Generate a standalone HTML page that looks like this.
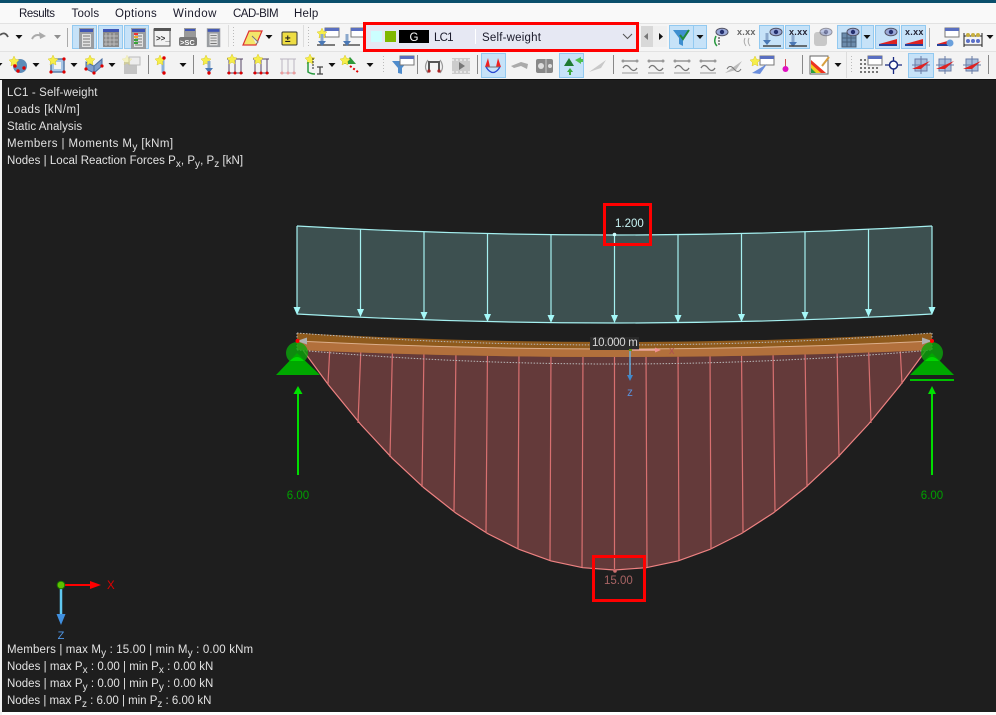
<!DOCTYPE html>
<html><head><meta charset="utf-8"><style>
html,body{margin:0;padding:0;background:#fff;width:996px;height:715px;overflow:hidden}
svg{display:block}
text{font-family:"Liberation Sans",sans-serif}
.m{font-size:11.5px;fill:#1a1a2a;letter-spacing:.2px}
.o{font-size:11.5px;fill:#e2e2e2;letter-spacing:.2px}
.s{font-size:10px}
.h{fill:#c6e2f8;stroke:#92c9f0}
.ic{font-size:9px;font-weight:bold;fill:#666;letter-spacing:.3px}
.ib{font-size:9px;font-weight:bold;fill:#223;letter-spacing:.3px}
</style></head><body>
<svg width="996" height="715" viewBox="0 0 996 715" xmlns="http://www.w3.org/2000/svg">
<defs>
<path id="d" d="M-3.5 0h7l-3.5 4z" fill="#111"/>
<g id="win"><rect x="0" y="0" width="15" height="21" fill="#9a9da1"/><rect x="1" y="1" width="13" height="3" fill="#3f55b5"/><rect x="3" y="6" width="9" height="13" fill="#e2e2e2"/><path d="M4 8h7M4 11h7M4 14h7M4 17h7" stroke="#777"/></g>
<g id="wm"><rect x="0" y="0" width="14" height="9" fill="#fff" stroke="#777"/><rect x="0" y="0" width="14" height="3" fill="#5a6fc0"/></g>
<g id="star"><path d="M0-5l1.500 3.300 3.500.7-2.500 2.500.5 3.500-3-1.700-3 1.700.5-3.500-2.500-2.500 3.500-.7z" fill="#f6ee4a" stroke="#d8c830" stroke-width=".5"/></g>
<g id="bm"><path d="M2 2h14" stroke="#888" stroke-width="1.300"/><circle cx="2" cy="2" r="1.500" fill="#999"/><circle cx="16" cy="2" r="1.500" fill="#999"/><path d="M2 9q3-5 7 0t7 0" fill="none" stroke="#777" stroke-width="1.300"/><path d="M1 14h16" stroke="#999"/></g>
<g id="eye"><ellipse cx="0" cy="0" rx="6" ry="3.800" fill="#9aa9d8" stroke="#556"/><circle r="2.200" fill="#25306e"/></g>
<g id="dn"><rect x="-1.500" y="0" width="3" height="7" fill="#8aa8cc"/><path d="M-4 7h8l-4 5z" fill="#4a78b5"/></g>
<g id="fr"><path d="M0 0h16M2 0v14M14 0v14M8 0v14M0 14h16" stroke="#546" fill="none"/><circle cx="2" cy="14" r="1.500" fill="#d00"/><circle cx="8" cy="14" r="1.500" fill="#d00"/><circle cx="14" cy="14" r="1.500" fill="#d00"/></g>
<g id="vw"><path d="M3 1h12v12H3z" fill="#a6bedc" stroke="#6a7ca6"/><path d="M0 7h18M9 -2v18" stroke="#6a7ca6"/><path d="M0 11l9-4 9-4-9 8z" fill="#d22"/></g>
</defs>

<rect width="996" height="715" fill="#fff"/>
<rect width="996" height="3" fill="#0b4f6c"/>
<rect y="3" width="996" height="20" fill="#f9f9f9"/>
<rect y="23" width="996" height="28" fill="#f5f5f5"/>
<rect y="51" width="996" height="28" fill="#f3f3f3"/>
<path d="M0 23.500H996M0 51.500H996" stroke="#e2e2e2"/>
<rect y="79" width="996" height="1" fill="#111"/>

<text class="m" x="-6" y="17">e</text><text class="m" x="19" y="17" style="letter-spacing:-.4px">Results</text><text class="m" x="71.500" y="17">Tools</text><text class="m" x="115" y="17" style="letter-spacing:.35px">Options</text><text class="m" x="173" y="17" style="letter-spacing:.5px">Window</text><text class="m" x="233" y="17" style="letter-spacing:-.5px">CAD-BIM</text><text class="m" x="294" y="17">Help</text>

<!-- row 1 -->
<path d="M0 35q5-4 8 2" fill="none" stroke="#555" stroke-width="1.800"/><use href="#d" x="19" y="35"/>
<path d="M32 39q3-6 10-3" fill="none" stroke="#aaa" stroke-width="2"/><path d="M39 32l7 4-6 3z" fill="#aaa"/><use href="#d" x="57.500" y="35" opacity=".45"/>
<path d="M67.500 28v19" stroke="#aaa"/>
<rect class="h" x="72.500" y="25.500" width="24" height="23"/><rect class="h" x="98.500" y="25.500" width="24" height="23"/><rect class="h" x="124.500" y="25.500" width="24" height="23"/>
<use href="#win" x="79" y="28"/>
<rect x="103" y="29" width="16" height="18" fill="#8a8a8a"/><rect x="103" y="29" width="16" height="3" fill="#3f55b5"/><path d="M106 33v13M110 33v13M114 33v13M104 36h14M104 40h14M104 44h14" stroke="#bbb"/>
<use href="#win" x="131" y="28"/><path d="M134 34h4M134 37h4M134 40h4M134 43h4" stroke="#3aa33a" stroke-width="2"/><path d="M134 34h4" stroke="#e33" stroke-width="2"/><path d="M134 37h4" stroke="#ea3" stroke-width="2"/>
<rect x="154" y="29" width="16" height="17" fill="#f2f2f2" stroke="#555"/><rect x="154" y="28" width="17" height="3" fill="#555"/><text x="156" y="41" style="font-size:8px;font-weight:bold;fill:#333">&gt;&gt;_</text>
<rect x="184" y="28" width="12" height="10" fill="#999"/><rect x="185" y="29" width="10" height="2" fill="#3f55b5"/><rect x="179" y="37" width="18" height="9" rx="2" fill="#777"/><text x="180" y="45" style="font-size:7.500px;font-weight:bold;fill:#fff">&gt;SC</text>
<use href="#win" x="207" y="28" transform="translate(20.500 3) scale(.9)"/>
<path d="M228.500 25v22" stroke="#ddd"/><path d="M233.500 27v21" stroke="#bbb" stroke-dasharray="1 2"/>
<path d="M249 31h13l-6 14h-13z" fill="#f3e66a" stroke="#d33" stroke-width="1.200"/><path d="M252 36l6 6-2 2" stroke="#777" fill="#eee"/><use href="#d" x="269" y="35"/>
<rect x="282" y="32" width="15" height="13" rx="1" fill="#eedd44" stroke="#333"/><text x="285" y="42" style="font-size:10px;font-weight:bold;fill:#222">&#177;</text>
<path d="M303.500 25v22" stroke="#ddd"/><path d="M308.500 27v21" stroke="#bbb" stroke-dasharray="1 2"/>
<use href="#wm" x="325" y="28"/><use href="#star" x="322" y="33"/><path d="M317 45h18" stroke="#555" stroke-width="1.500"/><use href="#dn" x="322" y="34"/>
<use href="#wm" x="351" y="28"/><path d="M343 45h17" stroke="#555" stroke-width="1.500"/><use href="#dn" x="347" y="34"/>

<!-- load case box -->
<rect x="364.500" y="23.500" width="273" height="27" fill="#e6e8f3" stroke="#f00" stroke-width="3"/>
<rect x="371" y="31" width="11" height="11" fill="#ccffff"/><rect x="385" y="31" width="11" height="11" fill="#80b800"/><rect x="399" y="30" width="30" height="13" fill="#000"/>
<text x="414" y="41" text-anchor="middle" style="font-size:11.500px;fill:#fff">G</text>
<text class="m" x="434" y="41" style="letter-spacing:-.8px">LC1</text><path d="M475.500 29v15" stroke="#fff"/><text class="m" x="482" y="41">Self-weight</text>
<path d="M623 34l4.500 4.500 4.500-4.500" fill="none" stroke="#555"/>
<rect x="641" y="26" width="12" height="21" fill="#d8d8d8"/><path d="M648 33v7l-4-3.500z" fill="#777"/><rect x="653" y="26" width="14" height="21" fill="#f0f0f0"/><path d="M659 33v7l4-3.500z" fill="#111"/>

<rect class="h" x="669.500" y="25.500" width="24" height="23"/><rect class="h" x="693.500" y="25.500" width="13" height="23"/>
<path d="M673 30h16l-6 8v8l-4-2v-6z" fill="#3f8fd0"/><path d="M680 35l3 4 6-9" fill="none" stroke="#1f8a3a" stroke-width="2"/><use href="#d" x="700" y="35"/>
<use href="#eye" x="722" y="32"/><path d="M716 36q-3 6 1 10" fill="none" stroke="#2a9a40" stroke-width="1.500"/><path d="M719 37v8" stroke="#222" stroke-dasharray="2 1"/>
<text class="ic" x="737" y="35">x.xx</text><path d="M745 38q-2 4 1 8M749 38q-2 4 1 8" fill="none" stroke="#aaa"/>
<rect class="h" x="759.500" y="25.500" width="24" height="23"/><use href="#eye" x="776" y="32"/><use href="#dn" x="767" y="33"/><path d="M763 46h18" stroke="#444" stroke-width="1.500"/>
<rect class="h" x="785.500" y="25.500" width="24" height="23"/><text class="ib" x="789" y="35">x.xx</text><use href="#dn" x="793" y="35"/><path d="M789 46h18" stroke="#444" stroke-width="1.500"/>
<rect x="814" y="32" width="13" height="14" rx="3" fill="#c8c8c8"/><use href="#eye" x="826" y="32" opacity=".6"/>
<rect class="h" x="837.500" y="25.500" width="24" height="23"/><rect class="h" x="861.500" y="25.500" width="12" height="23"/>
<rect x="842" y="33" width="14" height="14" fill="#6c8cac" stroke="#48607a"/><path d="M842 38h14M842 42h14M847 33v14M851 33v14" stroke="#48607a"/><use href="#eye" x="853" y="32"/><use href="#d" x="867" y="35"/>
<rect class="h" x="875.500" y="25.500" width="24" height="23"/><use href="#eye" x="891" y="32"/><path d="M879 44l18-5v5z" fill="#d22"/><path d="M879 44h18v2h-18z" fill="#24409a"/>
<rect class="h" x="901.500" y="25.500" width="24" height="23"/><text class="ib" x="905" y="35">x.xx</text><path d="M905 44l18-5v5z" fill="#d22"/><path d="M905 44h18v2h-18z" fill="#24409a"/>
<path d="M929.500 28v19" stroke="#aaa"/>
<use href="#wm" x="945" y="28"/><path d="M937 44l14-4v4z" fill="#d22"/><path d="M937 44h13v2h-13z" fill="#24409a"/><circle cx="950" cy="43" r="3.500" fill="#6aa0dc"/>
<path d="M964 33v14M982 33v14M964 36h18M964 45h18" stroke="#222"/><g fill="#c8b040"><circle cx="968" cy="35" r="2"/><circle cx="973" cy="35" r="2"/><circle cx="978" cy="35" r="2"/></g><g fill="#5a70c8"><circle cx="968" cy="41" r="2"/><circle cx="973" cy="41" r="2"/><circle cx="978" cy="41" r="2"/></g><use href="#d" x="990" y="35"/>

<!-- row 2 -->
<use href="#d" x="-1" y="63"/>
<circle cx="20" cy="66" r="7" fill="#5d8cb8"/><use href="#star" x="14" y="61"/><g fill="#d00"><circle cx="15" cy="66" r="1.700"/><circle cx="24" cy="68" r="1.700"/><circle cx="18" cy="71" r="1.700"/></g><use href="#d" x="36" y="63"/>
<rect x="51" y="59" width="13" height="13" fill="#a8c8e8" stroke="#5a7ca8" stroke-width="1.500"/><rect x="54" y="62" width="7" height="7" fill="#f3f3f3"/><use href="#star" x="53" y="60"/><g fill="#d00"><circle cx="51" cy="72" r="1.600"/><circle cx="64" cy="72" r="1.600"/><circle cx="64" cy="59" r="1.600"/></g><use href="#d" x="74" y="63"/>
<path d="M86 62l8 4v7l-8-4zM94 66l8-7v7l-8 7z" fill="#7f9ecb" stroke="#4a6ea0"/><use href="#star" x="90" y="60"/><g fill="#d00"><circle cx="86" cy="69" r="1.600"/><circle cx="94" cy="73" r="1.600"/><circle cx="102" cy="66" r="1.600"/></g><use href="#d" x="112" y="63"/>
<rect x="124" y="62" width="13" height="12" fill="#c4c4c4"/><rect x="129" y="57" width="11" height="8" fill="#ededed" stroke="#bbb"/><use href="#star" x="127" y="60" opacity=".3"/>
<path d="M148.500 55v19" stroke="#888"/>
<path d="M163 60v13" stroke="#8ab0d8" stroke-width="3"/><use href="#star" x="160" y="60"/><circle cx="164" cy="58" r="1.700" fill="#d00"/><circle cx="164" cy="73" r="1.700" fill="#d00"/><use href="#d" x="183" y="63"/>
<path d="M193.500 55v19" stroke="#888"/>
<use href="#star" x="206" y="60"/><use href="#dn" x="209" y="61"/><circle cx="209" cy="73" r="1.700" fill="#d00"/>
<use href="#fr" x="227" y="59"/><use href="#star" x="232" y="59"/><use href="#fr" x="253" y="59"/><use href="#star" x="258" y="59"/>
<use href="#fr" x="280" y="59" opacity=".35"/>
<use href="#star" x="310" y="59"/><path d="M308 62v10q3 2 7 2" fill="none" stroke="#2a9a40" stroke-width="1.500"/><path d="M313 58v12" stroke="#222" stroke-dasharray="2 1"/><path d="M317 67h6M320 67v7M317 74h6" stroke="#444" stroke-width="1.300"/><use href="#d" x="332" y="63"/>
<path d="M350 57l6 7h-12z" fill="#2e9a3a"/><use href="#star" x="345" y="60"/><path d="M350 66l8 6" stroke="#d00" stroke-dasharray="2 2" stroke-width="2"/><use href="#d" x="370" y="63"/>
<path d="M383.500 56v18" stroke="#bbb" stroke-dasharray="1 2"/>
<path d="M392 61h16l-6 7v6l-4-1v-5z" fill="#4f8ccc"/><use href="#wm" x="400" y="56"/>
<path d="M417.500 55v19" stroke="#888"/>
<path d="M428 62h12M429 62v10M439 62v10" stroke="#555" stroke-width="2" fill="none"/><path d="M428 60q-5 7 0 13M440 60q5 7 0 13" fill="none" stroke="#999" stroke-width="1.200"/><circle cx="429" cy="71" r="1.600" fill="#a22"/><circle cx="439" cy="71" r="1.600" fill="#a22"/>
<rect x="452" y="58" width="18" height="16" fill="#ccc"/><path d="M452 60h18M452 72h18" stroke="#fff" stroke-dasharray="2 2"/><path d="M459 62l6 4-6 4z" fill="#777"/>
<path d="M477.500 55v19" stroke="#888"/>
<rect class="h" x="481.500" y="53.500" width="24" height="24"/><path d="M485 67l3-9 2 9zM501 67l-3-9-2 9z" fill="#e22"/><path d="M486 67h14" stroke="#777"/><path d="M486 67q7 11 14 0" fill="none" stroke="#2a4ad0" stroke-width="1.300"/>
<path d="M511 66l10-4 7 2-1 5-6-3-7 2z" fill="#aaa"/>
<rect x="536" y="59" width="17" height="14" rx="2" fill="#888"/><circle cx="541" cy="66" r="3" fill="#ddd"/><path d="M546 59v14" stroke="#ccc"/><circle cx="550" cy="66" r="2" fill="#ddd"/>
<rect class="h" x="559.500" y="53.500" width="24" height="24"/><path d="M569 58l5 8h-10z" fill="#1e7a30"/><path d="M575 60l6-3v2h2v3h-2v2z" fill="#4ec04e"/><path d="M570 68l3 4h-2v3h-2v-3h-2z" fill="#3aa83a"/>
<path d="M589 72l17-12-5 8z" fill="#c8c8c8"/>
<path d="M613.500 55v19" stroke="#888"/>
<use href="#bm" x="621" y="59"/><use href="#bm" x="647" y="59"/><use href="#bm" x="673" y="59"/><use href="#bm" x="699" y="59"/>
<path d="M725 73l17-12-6 9z" fill="#bbb"/><path d="M727 69q3-5 7 0t7 0" fill="none" stroke="#777"/>
<use href="#wm" x="760" y="56"/><use href="#star" x="755" y="61"/><path d="M752 73l15-9-7 10z" fill="#6a8edc"/>
<path d="M785.500 59v9" stroke="#d05050"/><circle cx="785.500" cy="69" r="3" fill="#e010c0"/>
<path d="M802.500 55v19" stroke="#888"/>
<rect x="810" y="56" width="18" height="18" fill="#fff" stroke="#666"/><path d="M811 60l15 13h-15z" fill="#ee3322"/><path d="M811 64l10 9h-10z" fill="#f2d020"/><path d="M811 68l5 5h-5z" fill="#2aa040"/><path d="M822 66l7-9" stroke="#d8a040" stroke-width="2"/><use href="#d" x="838" y="63"/>
<path d="M846.500 52v26" stroke="#ddd"/><path d="M851.500 56v18" stroke="#bbb" stroke-dasharray="1 2"/>
<path d="M860 60h18M860 64h18M860 68h18M860 72h18" stroke="#777" stroke-width="2" stroke-dasharray="2 2"/><use href="#wm" x="868" y="56"/>
<path d="M885 65h17M893.500 57v17" stroke="#1a2a80" stroke-width="1.300"/><circle cx="893.500" cy="65" r="4" fill="#fff" stroke="#1a2a80" stroke-width="1.500"/>
<rect class="h" x="908.500" y="53.500" width="25" height="24"/><use href="#vw" x="912" y="58"/><use href="#vw" x="936" y="58"/><use href="#vw" x="963" y="58"/>
<path d="M988.500 55v19" stroke="#888"/>

<!-- canvas -->
<rect x="2" y="80" width="994" height="632" fill="#1e1e1e"/>
<rect x="0" y="80" width="2" height="635" fill="#f2f2f2"/>

<!-- load -->
<path d="M297 226Q615 244 932 226V314Q615 332 297 314Z" fill="#3d5050"/>
<g fill="none" stroke="#a5f0f0" stroke-width="1.200"><path d="M297 226Q615 244 932 226M297 314Q615 332 932 314"/>
<path d="M297 226V310M360.500 229V314M424 232V317M487.500 234V319M551 235V320M614.500 235V320M678 235V320M741.500 234V319M805 232V317M868.500 229V314M932 226V310"/></g>
<g fill="#a5f8f8"><path d="M293.500 307h7l-3.500 8z"/><path d="M357 309h7l-3.500 8z"/><path d="M420.500 312h7l-3.500 8z"/><path d="M484 314h7l-3.500 8z"/><path d="M547.500 315h7l-3.500 8z"/><path d="M611 315h7l-3.500 8z"/><path d="M674.500 315h7l-3.500 8z"/><path d="M738 314h7l-3.500 8z"/><path d="M801.500 312h7l-3.500 8z"/><path d="M865 309h7l-3.500 8z"/><path d="M928.500 307h7l-3.500 8z"/></g>
<circle cx="614.500" cy="234.500" r="1.800" fill="#cff"/>
<text x="615" y="227" style="font-size:11.500px;fill:#c8f4f4">1.200</text>

<!-- moment -->
<path d="M297 342L328.750 385.300L360.500 424.100L392.250 458.300L424 487.900L455.750 513L487.500 533.500L519.250 549.500L551 560.900L582.750 567.700L614.500 570L646.250 567.700L678 560.900L709.750 549.500L741.500 533.500L773.250 513L805 487.900L836.750 458.300L868.500 424.100L900.250 385.300L932 342Z" fill="#643a3a"/>
<path d="M297 342L328.750 385.300L360.500 424.100L392.250 458.300L424 487.900L455.750 513L487.500 533.500L519.250 549.500L551 560.900L582.750 567.700L614.500 570L646.250 567.700L678 560.900L709.750 549.500L741.500 533.500L773.250 513L805 487.900L836.750 458.300L868.500 424.100L900.250 385.300L932 342" fill="none" stroke="#ee8282" stroke-width="1.200"/>
<g stroke="#d87070" stroke-width="1.200" fill="none">
<path d="M330 345L328 384M361 346L358 423M392.500 347L390 457M424 348L422 487M456 349L454 512M487.500 349L486 533M519 350L518 549M551 350L550 560M583 350L582 567M614.500 350V569M646 350L647 567M678 350L679 560M710 350L711 549M741.500 349L743 533M773 349L775 512M805 348L807 487M837 347L839 457M868.500 346L871 423M900 345L902 384"/></g>

<!-- beam -->
<path d="M297 333Q615 351 932 333V350Q615 364 297 350Z" fill="#8f5a1c"/>
<path d="M297 341Q615 357 932 341V350Q615 364 297 350Z" fill="#b2703c"/>
<path d="M297 341Q615 357 932 341" fill="none" stroke="#dcae8a" stroke-width="1"/>
<path d="M297 333Q615 357 932 333M297 350Q615 378 932 350" fill="none" stroke="#b8b8b8" stroke-dasharray="1.500 1.500"/>
<path d="M297 333v17M932 333v17" stroke="#b8b8b8" stroke-dasharray="1.500 1.500"/>
<path d="M297 341l10-3.500v7zM932 341l-10-3.500v7z" fill="#b0b0b0"/>

<!-- supports -->
<circle cx="297" cy="353" r="11" fill="#0aa50a" fill-opacity=".8"/>
<path d="M276 375L297 353L320 375Z" fill="#00a800"/><path d="M290 361q7-8 14 0Z" fill="#00d800"/>
<circle cx="932" cy="353" r="11" fill="#0aa50a" fill-opacity=".8"/>
<path d="M910 375L932 353L954 375Z" fill="#00a800"/><path d="M925 361q7-8 14 0Z" fill="#00d800"/>
<rect x="910" y="379" width="44" height="2" fill="#00c000"/>
<circle cx="297.500" cy="341" r="2" fill="#f00"/><circle cx="932" cy="341" r="2" fill="#f00"/>
<path d="M298 475V392" stroke="#00dd00" stroke-width="2"/><path d="M293.500 394L298 386L302.500 394Z" fill="#00e000"/>
<path d="M932 475V392" stroke="#00dd00" stroke-width="2"/><path d="M928 394L932 386L936 394Z" fill="#00e000"/>
<text x="298" y="499" text-anchor="middle" style="font-size:11.500px;fill:#00a000">6.00</text>
<text x="932" y="499" text-anchor="middle" style="font-size:11.500px;fill:#00a000">6.00</text>

<!-- label and local axes -->
<rect x="590" y="337" width="49" height="13" fill="#2a2a2a"/>
<text x="592" y="346" style="font-size:11.500px;fill:#d6d6d6;letter-spacing:-.3px">10.000 m</text>
<path d="M631 350H659" stroke="#f5b0b0" stroke-width="1.200"/><path d="M655 347.500l6 2.500-6 2.500z" fill="#f09090"/>
<text x="669" y="354" style="font-size:11px;fill:#b05050">x</text>
<path d="M630 350V376" stroke="#60b8f0" stroke-width="1.300"/><path d="M627 375h6l-3 6z" fill="#3f88cc"/><rect x="629" y="349" width="3" height="2" fill="#6a9a10"/>
<text x="630" y="396" text-anchor="middle" style="font-size:11.500px;fill:#5a90d8">z</text>
<circle cx="615" cy="571" r="1.800" fill="#d07070"/>
<text x="604" y="584" style="font-size:11.500px;fill:#a86464">15.00</text>

<!-- red boxes -->
<rect x="604.500" y="204.500" width="46" height="40" fill="none" stroke="#f00" stroke-width="3"/>
<rect x="593.500" y="556.500" width="51" height="44" fill="none" stroke="#f00" stroke-width="3"/>

<!-- overlay text -->
<text class="o" x="7" y="96" style="letter-spacing:.14px">LC1 - Self-weight</text>
<text class="o" x="7" y="113" style="letter-spacing:.45px">Loads [kN/m]</text>
<text class="o" x="7" y="130" style="letter-spacing:.07px">Static Analysis</text>
<text class="o" x="7" y="147" style="letter-spacing:.42px">Members | Moments M<tspan class="s" dy="3">y</tspan><tspan dy="-3"> [kNm]</tspan></text>
<text class="o" x="7" y="164" style="letter-spacing:.03px">Nodes | Local Reaction Forces P<tspan class="s" dy="3">x</tspan><tspan dy="-3">, P</tspan><tspan class="s" dy="3">y</tspan><tspan dy="-3">, P</tspan><tspan class="s" dy="3">z</tspan><tspan dy="-3"> [kN]</tspan></text>

<text class="o" x="7" y="653" style="letter-spacing:.15px">Members | max M<tspan class="s" dy="3">y</tspan><tspan dy="-3"> : 15.00 | min M</tspan><tspan class="s" dy="3">y</tspan><tspan dy="-3"> : 0.00 kNm</tspan></text>
<text class="o" x="7" y="670" style="letter-spacing:.03px">Nodes | max P<tspan class="s" dy="3">x</tspan><tspan dy="-3"> : 0.00 | min P</tspan><tspan class="s" dy="3">x</tspan><tspan dy="-3"> : 0.00 kN</tspan></text>
<text class="o" x="7" y="687" style="letter-spacing:.03px">Nodes | max P<tspan class="s" dy="3">y</tspan><tspan dy="-3"> : 0.00 | min P</tspan><tspan class="s" dy="3">y</tspan><tspan dy="-3"> : 0.00 kN</tspan></text>
<text class="o" x="7" y="704" style="letter-spacing:-.02px">Nodes | max P<tspan class="s" dy="3">z</tspan><tspan dy="-3"> : 6.00 | min P</tspan><tspan class="s" dy="3">z</tspan><tspan dy="-3"> : 6.00 kN</tspan></text>

<!-- global axes -->
<path d="M61 585H92" stroke="#f00" stroke-width="2"/><path d="M90 581l11 4-11 4z" fill="#f00"/>
<text x="107" y="589" style="font-size:11.500px;fill:#e00000">X</text>
<path d="M61 585V615" stroke="#60c8f0" stroke-width="2.500"/><path d="M56.500 614h9l-4.500 11z" fill="#4090e0"/>
<circle cx="61" cy="585" r="3.800" fill="#60c000" stroke="#1a7a00"/>
<text x="61" y="639" text-anchor="middle" style="font-size:11px;fill:#5098e8">Z</text>
</svg>
</body></html>
